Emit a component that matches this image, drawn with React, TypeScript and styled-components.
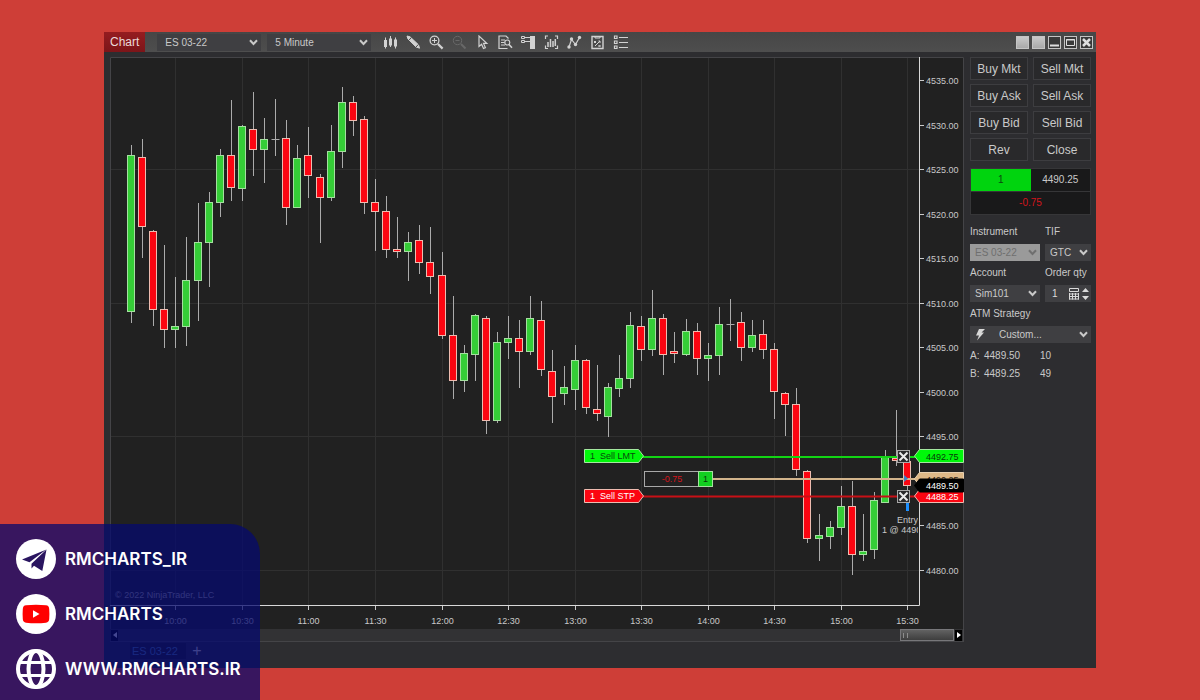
import React from "react";
import styled, { createGlobalStyle } from "styled-components";

const GlobalStyle = createGlobalStyle`
  * { box-sizing: border-box; }
  body {
    margin: 0;
    background: #ce3e37;
    font-family: "Liberation Sans", Arial, sans-serif;
    font-size: 10px;
    color: #c9c9c9;
  }
  button, input, select { font: inherit; color: inherit; margin: 0; padding: 0; border: 0; }
`;

const Page = styled.main`
  position: relative;
  min-height: 100vh;
  padding: 32px 104px;
`;

const TradeWindow = styled.section`
  background: #2d2d30;
`;

const TitleBar = styled.header`
  display: flex;
  align-items: center;
  height: 20px;
  padding-right: 3px;
  background: linear-gradient(#464646, #4e4e4e);
`;

const TitleTag = styled.h1`
  margin: 0 12px 0 0;
  padding: 0 6px;
  align-self: stretch;
  font-size: 12px;
  font-weight: 400;
  line-height: 20px;
  color: #eadada;
  background: linear-gradient(#951c20, #7c1519);
`;

const SelectShell = styled.span<{ $disabled?: boolean }>`
  display: grid;
  align-items: center;
  height: 17px;
  color: ${(p) => (p.$disabled ? "#6f6f6f" : "#c9c9c9")};
  background: ${(p) => (p.$disabled ? "#9a9a9a" : "#3f3f42")};
  svg { grid-area: 1 / 1; justify-self: end; margin-right: 3px; pointer-events: none; }
`;

const NativeSelect = styled.select<{ $indent: number }>`
  grid-area: 1 / 1;
  width: 100%;
  height: 100%;
  padding-left: ${(p) => p.$indent}px;
  appearance: none;
  background: transparent;
  color: inherit;
  opacity: 1;
`;

const TitleSelect = styled.div`
  width: 104px;
  margin-right: 6px;
`;

const Toolbar = styled.div`
  display: flex;
  gap: 8px;
  margin-left: 6px;
`;

const IconButton = styled.button<{ $dim?: boolean }>`
  display: grid;
  place-items: center;
  width: 15px;
  height: 16px;
  background: none;
  color: ${(p) => (p.$dim ? "#686868" : "#d2d2d2")};
`;

const WindowControls = styled.div`
  display: flex;
  gap: 3px;
  margin-left: auto;
`;

const ControlButton = styled.button<{ $filled?: boolean }>`
  display: grid;
  place-items: center;
  width: 13px;
  height: 13px;
  border: 1px solid #c4c4c4;
  color: #dedede;
  background: ${(p) => (p.$filled ? "linear-gradient(#c9c9c9, #a9a9a9)" : "#3a3a3a")};
`;

const Body = styled.div`
  display: grid;
  grid-template-columns: minmax(0, 1fr) 132px;
  padding: 5px 0 0 6px;
`;

const ChartPane = styled.div`
  min-width: 0;
`;

const ChartSvg = styled.svg`
  display: block;
  width: 100%;
  height: auto;
  background: #212121;
  font-family: "Liberation Sans", Arial, sans-serif;
  font-size: 9px;
`;

const ScrollTrack = styled.div`
  display: flex;
  align-items: center;
  height: 13px;
  padding: 0 1px;
  border-right: 1px solid #48484b;
  border-bottom: 1px solid #444447;
  background: #323234;
`;

const ScrollArrow = styled.button`
  display: grid;
  place-items: center;
  width: 7px;
  height: 11px;
  background: #000;
  color: #fff;
`;

const ScrollThumb = styled.div`
  width: 54px;
  height: 12px;
  margin: 0 1px 0 auto;
  padding: 3px 2px;
  border: 1px solid #77777a;
  background: linear-gradient(#626262, #3e3e3e);
  &::before {
    content: "";
    display: block;
    width: 3px;
    height: 5px;
    border: solid #8d8d8d;
    border-width: 0 1px;
  }
`;

const TabRow = styled.nav`
  display: flex;
  align-items: center;
  gap: 5px;
  height: 26px;
  padding: 1px 0 9px 20px;
`;

const Tab = styled.button<{ $wide?: boolean }>`
  width: ${(p) => (p.$wide ? 56 : 12)}px;
  height: 16px;
  text-align: ${(p) => (p.$wide ? "left" : "center")};
  padding-left: ${(p) => (p.$wide ? 2 : 0)}px;
  font-size: ${(p) => (p.$wide ? 11 : 16)}px;
  line-height: 16px;
  color: ${(p) => (p.$wide ? "#4f84b8" : "#e4e4e4")};
  background: ${(p) => (p.$wide ? "#1d1d1f" : "none")};
`;

const OrderPanel = styled.aside`
  padding: 0 5px 0 6px;
`;

const ButtonGrid = styled.div`
  display: grid;
  grid-template-columns: 1fr 1fr;
  gap: 4px 5px;
`;

const OrderButton = styled.button`
  height: 23px;
  border: 1px solid #3d3d40;
  background: #29292b;
  font-size: 12px;
  color: #c9c9c9;
`;

const PositionBox = styled.div`
  display: grid;
  grid-template-columns: 1fr 1fr;
  margin-top: 7px;
  border: 1px solid #363638;
  background: #19191a;
  text-align: center;
  line-height: 22px;
`;

const PositionSize = styled.span`
  background: #00d40e;
  color: #0b4a0f;
`;

const ProfitLoss = styled.span`
  grid-column: 1 / -1;
  border-top: 1px solid #363638;
  color: #d3151c;
`;

const Form = styled.form`
  display: grid;
  grid-template-columns: 70px 1fr;
  gap: 5px;
  margin-top: 10px;
`;

const Field = styled.label<{ $full?: boolean }>`
  display: grid;
  grid-template-rows: 14px 17px;
  gap: 5px;
  grid-column: ${(p) => (p.$full ? "1 / -1" : "auto")};
  line-height: 14px;
  white-space: nowrap;
`;

const QuantityBox = styled.span`
  display: flex;
  align-items: center;
  gap: 3px;
  padding: 0 2px 0 7px;
  background: #3f3f42;
  color: #dadada;
`;

const QuantityInput = styled.input`
  flex: 1;
  width: 0;
  background: none;
`;

const StrategyShell = styled(SelectShell)`
  > svg:first-child { justify-self: start; margin-left: 5px; }
`;

const QuoteTable = styled.table`
  margin-top: 3px;
  border-collapse: collapse;
  th, td { height: 18px; padding: 0; text-align: left; font-weight: 400; }
  th { width: 14px; }
  td:nth-child(2) { width: 56px; }
`;

const SocialCard = styled.footer`
  position: absolute;
  left: 0;
  bottom: 0;
  display: flex;
  flex-direction: column;
  gap: 15px;
  width: 260px;
  height: 176px;
  padding: 15px 16px;
  border-top-right-radius: 30px;
  background: rgba(5, 10, 110, 0.75);
`;

const SocialLink = styled.a`
  display: flex;
  align-items: center;
  gap: 9px;
  font-family: Inter, "Open Sans", sans-serif;
  font-size: 17px;
  font-weight: 600;
  line-height: 40px;
  color: #fff;
  text-decoration: none;
`;

const Chevron = () => (
  <svg width="9" height="7" viewBox="0 0 9 7" fill="none" stroke="currentColor" strokeWidth="2">
    <path d="M1 1.2 4.5 5 8 1.2" />
  </svg>
);

type PickerProps = { label: string; value: string; indent?: number; disabled?: boolean };
const Picker = ({ label, value, indent = 5, disabled }: PickerProps) => (
  <SelectShell $disabled={disabled}>
    <NativeSelect $indent={indent} aria-label={label} disabled={disabled}>
      <option>{value}</option>
    </NativeSelect>
    <Chevron />
  </SelectShell>
);

const tools: { name: string; dim?: boolean; art: React.ReactNode }[] = [
  {
    name: "Chart style",
    art: (
      <>
        <path d="M2.500 2.500v11M7.500 1v11M12.500 2.500v11" />
        <path d="M2.500 5v7M7.500 3.500v7M12.500 4.500v7" strokeWidth="3" />
      </>
    ),
  },
  {
    name: "Drawing tools",
    art: (
      <>
        <path d="m1 1 3 .8 8.5 8 1 3.4-3.5-1.3L2 4Z" fill="currentColor" />
        <path d="m3.2 5 2-2.4M10 12l2.4-2.6" stroke="#4a4a4a" />
      </>
    ),
  },
  {
    name: "Zoom in",
    art: (
      <>
        <circle cx="5.5" cy="5.5" r="4.4" strokeWidth="1.3" />
        <path d="M5.500 3v5M3 5.500h5" />
        <path d="m9 9 4.600 4.600" strokeWidth="2.200" />
      </>
    ),
  },
  {
    name: "Zoom out",
    dim: true,
    art: (
      <>
        <circle cx="5.5" cy="5.5" r="4.2" />
        <path d="M3.500 5.500h4" />
        <path d="m9 9 4.500 4.500" strokeWidth="2" />
      </>
    ),
  },
  { name: "Cursor", art: <path d="M4 1v10.500l2.600-2.300 1.900 4.300 1.900-.9-1.900-4.200h3.300Z" strokeWidth="1.200" /> },
  {
    name: "Data box",
    art: (
      <>
        <path d="M9.500 13.500H1V1h7l2.500 2.500M3 5h4M3 7.500h3.500M3 10h4" strokeWidth="1.200" />
        <circle cx="9.300" cy="7.500" r="2.500" strokeWidth="1.200" />
        <path d="m11 9.500 3 3.300" strokeWidth="1.600" />
      </>
    ),
  },
  {
    name: "Chart trader",
    art: (
      <>
        <path d="M.5 1.500h3v2h-3zM.5 5.500h3v2h-3zM4 2.500h5M4 6.500h5" />
        <path d="M9 1h5v13H9z" fill="currentColor" stroke="none" />
      </>
    ),
  },
  {
    name: "Chart objects",
    art: (
      <>
        <path d="M4 1H1.500v3M11 1h2.500v3M4 13.500H1.500v-3M11 13.500h2.500v-3" strokeWidth="1.200" />
        <path d="M4 7v5M6.500 4v8M9 6v6M11.300 4v7" strokeWidth="1.500" />
      </>
    ),
  },
  {
    name: "Indicators",
    art: (
      <>
        <path d="M2 12 4.500 4.500 8.500 9.500 12.500 2.500" strokeWidth="1.200" />
        <g fill="currentColor" stroke="none">
          <circle cx="2" cy="12" r="1.700" />
          <circle cx="4.500" cy="4" r="1.700" />
          <circle cx="8.500" cy="9.500" r="1.700" />
          <circle cx="12.500" cy="2.500" r="1.700" />
        </g>
      </>
    ),
  },
  {
    name: "Strategies",
    art: (
      <>
        <path d="M2 1.500h11v12H2z" strokeWidth="1.400" />
        <path d="M5 1v2h5V1M4 6l2 2M6 6 4 8M8.500 10l2 2M10.500 10l-2 2M5 11l5-5M8.500 6H10v2" />
      </>
    ),
  },
  {
    name: "Properties",
    art: <path d="M1.500 1h2.500v2.500H1.500zM1.500 6h2.500v2.500H1.500zM1.500 11h2.500v2.500H1.500zM6 2.500h9M6 7.500h9M6 12.500h9" strokeWidth="1.200" />,
  },
];

// Each bar: [direction, high, low, body top, body bottom]
type Bar = ["u" | "d" | "n", number, number, number, number];
const bars: Bar[] = [
  ["u", 145, 323, 155, 312], ["d", 139, 258, 157, 227], ["d", 230, 326, 231, 310],
  ["d", 245, 348, 309, 330], ["u", 277, 348, 326, 330], ["u", 237, 346, 280, 327],
  ["u", 203, 321, 242, 281], ["u", 192, 287, 202, 243], ["u", 149, 217, 155, 203],
  ["d", 100, 201, 155, 188], ["u", 125, 201, 126, 189], ["d", 92, 176, 129, 150],
  ["u", 118, 183, 139, 150], ["n", 99, 156, 139, 140], ["d", 120, 225, 138, 208],
  ["u", 145, 208, 158, 208], ["d", 127, 198, 155, 176], ["d", 174, 243, 177, 198],
  ["u", 125, 201, 151, 198], ["u", 87, 168, 102, 152], ["d", 96, 136, 102, 121],
  ["d", 116, 214, 119, 203], ["d", 179, 251, 202, 212], ["d", 196, 258, 211, 250],
  ["d", 217, 258, 249, 252], ["u", 232, 281, 242, 252], ["d", 225, 274, 240, 263],
  ["d", 227, 294, 262, 277], ["d", 252, 339, 275, 336], ["d", 296, 399, 335, 381],
  ["u", 345, 392, 353, 381], ["u", 314, 381, 315, 355], ["d", 316, 434, 318, 421],
  ["u", 332, 423, 342, 421], ["u", 316, 359, 338, 343], ["d", 320, 388, 338, 352],
  ["u", 296, 355, 318, 352], ["d", 301, 376, 320, 370], ["d", 350, 423, 371, 397],
  ["u", 366, 405, 387, 394], ["u", 345, 410, 360, 390], ["d", 359, 414, 360, 408],
  ["d", 365, 421, 409, 414], ["u", 383, 437, 387, 417], ["u", 355, 397, 378, 389],
  ["u", 312, 388, 325, 379], ["d", 316, 361, 326, 350], ["u", 290, 356, 318, 350],
  ["d", 314, 375, 318, 355], ["d", 332, 363, 351, 354], ["u", 319, 356, 331, 355],
  ["d", 323, 375, 331, 359], ["u", 343, 381, 355, 359], ["u", 307, 375, 324, 356],
  ["n", 299, 341, 324, 325], ["d", 312, 361, 322, 348], ["u", 320, 352, 335, 348],
  ["d", 320, 359, 334, 350], ["d", 343, 419, 349, 392], ["d", 392, 436, 393, 405],
  ["d", 388, 476, 404, 470], ["d", 470, 543, 471, 539], ["u", 514, 561, 535, 539],
  ["u", 521, 549, 527, 537], ["u", 486, 535, 506, 528], ["d", 481, 575, 506, 555],
  ["u", 514, 561, 551, 555], ["u", 492, 559, 500, 550], ["u", 450, 503, 456, 503],
  ["d", 410, 466, 458, 461], ["d", 456, 491, 461, 486],
];

const barX = (i: number) => Math.round(131 + i * 11.09) + 0.5;
const timeLabels = ["10:00", "10:30", "11:00", "11:30", "12:00", "12:30", "13:00", "13:30", "14:00", "14:30", "15:00", "15:30"];
const timeX = (i: number) => barX(4 + i * 6);
const prices = Array.from({ length: 12 }, (_, i) => 4535 - i * 5).filter((p) => p !== 4490);
const priceY = (p: number) => Math.round(80 + (4535 - p) * 8.9) + 0.5;

const Candle = ({ bar, x }: { bar: Bar; x: number }) => {
  const [dir, high, low, top, bottom] = bar;
  const fill = dir === "u" ? "#35cd37" : "#fb0511";
  return (
    <g>
      <path d={`M${x} ${high}V${low}`} stroke="#ababab" />
      {dir === "n" ? (
        <path d={`M${x - 4} ${top + 0.5}h8`} stroke="#ababab" />
      ) : (
        <rect x={x - 4} y={top + 0.5} width="7" height={bottom - top - 1} fill={fill} stroke={dir === "u" ? "#a5dfa0" : "#eebcb0"} />
      )}
    </g>
  );
};

type TagProps = { y: number; fill: string; edge: string; text: string; color: string };
const PriceTag = ({ y, fill, edge, text, color }: TagProps) => (
  <g>
    <path d={`M914.500 ${y}l5-6.500H963.500v13H919.500Z`} fill={fill} stroke={edge} />
    <text x="926" y={y + 3.500} fill={color}>{text}</text>
  </g>
);

const OrderTag = ({ y, fill, edge, text, color }: TagProps) => (
  <g>
    <path d={`M584.500 ${y - 6.500}h54l5 6.500-5 6.500h-54Z`} fill={fill} stroke={edge} />
    <text x="590" y={y + 3} fill={color}>1</text>
    <text x="600" y={y + 3} fill={color}>{text}</text>
  </g>
);

const CancelMark = ({ y }: { y: number }) => (
  <g>
    <rect x="897.500" y={y - 6} width="12" height="12" fill="#29292b" stroke="#a8a8a8" />
    <path d={`M899.500 ${y - 4}l8 8m0-8-8 8`} stroke="#ececec" strokeWidth="2" />
  </g>
);

const PriceChart = () => (
  <ChartSvg viewBox="110 57 854 572" role="img" aria-label="ES 03-22 five minute candlestick chart">
    <defs>
      <clipPath id="plot"><rect x="110" y="57" width="808" height="548" /></clipPath>
    </defs>
    <path d="M110.500 629V57.500H963.500V629" fill="none" stroke="#444447" />
    <g stroke="#303030">
      {timeLabels.map((t, i) => <path key={t} d={`M${timeX(i)} 58V605`} />)}
      {[4525, 4510, 4495, 4480].map((p) => <path key={p} d={`M111 ${priceY(p)}H919`} />)}
    </g>
    <text x="115" y="598" fill="#b0b0b0">© 2022 NinjaTrader, LLC</text>
    {bars.map((bar, i) => <Candle key={i} bar={bar} x={barX(i)} />)}
    <path d="M643 457H915" stroke="#12d414" strokeWidth="2" />
    <path d="M713 479H915" stroke="#d2b48c" strokeWidth="2" />
    <path d="M643 496.500H915" stroke="#c81016" strokeWidth="2" />
    <path d="M904 475l4 3.500-4 3.500Z" fill="#3f7fc4" />
    <path d="M907.500 502v9" stroke="#1e90ff" strokeWidth="3" />
    <g clipPath="url(#plot)" fill="#c9c9c9">
      <text x="897" y="523">Entry</text>
      <text x="882" y="533">1 @ 4490</text>
    </g>
    <path d="M110 605.500H919.500V57" fill="none" stroke="#d8d8d8" />
    <g fill="#c9c9c9" stroke="none">
      {prices.map((p) => <text key={p} x="926" y={priceY(p) + 3}>{p.toFixed(2)}</text>)}
      {timeLabels.map((t, i) => <text key={t} x={timeX(i)} y="624" textAnchor="middle">{t}</text>)}
    </g>
    <g stroke="#c9c9c9">
      {prices.map((p) => <path key={p} d={`M920 ${priceY(p)}h4`} />)}
      {timeLabels.map((t, i) => <path key={t} d={`M${timeX(i)} 606v4`} />)}
    </g>
    <OrderTag y={456} fill="#00f80a" edge="#a5e8a0" text="Sell LMT" color="#084a0a" />
    <OrderTag y={496} fill="#fb0511" edge="#eebcb0" text="Sell STP" color="#ffffff" />
    <rect x="644.500" y="471.500" width="68" height="15" fill="#212121" stroke="#a9a9a9" />
    <rect x="698.500" y="471.500" width="14" height="15" fill="#12cf20" stroke="#a5dfa0" />
    <text x="672" y="482" fill="#d3151c" textAnchor="middle">-0.75</text>
    <text x="703" y="482" fill="#083a0a">1</text>
    <PriceTag y={456} fill="#00f80a" edge="#a5e8a0" text="4492.75" color="#063a08" />
    <PriceTag y={479} fill="#deb887" edge="#e8d0b0" text="4490.25" color="#2a2010" />
    <PriceTag y={496} fill="#fb0511" edge="#eebcb0" text="4488.25" color="#ffffff" />
    <PriceTag y={485.500} fill="#000000" edge="#000000" text="4489.50" color="#ffffff" />
    <CancelMark y={456.500} />
    <CancelMark y={496.500} />
  </ChartSvg>
);

const orderActions = ["Buy Mkt", "Sell Mkt", "Buy Ask", "Sell Ask", "Buy Bid", "Sell Bid", "Rev", "Close"];

const OrderEntry = () => (
  <OrderPanel>
    <ButtonGrid>
      {orderActions.map((a) => <OrderButton key={a}>{a}</OrderButton>)}
    </ButtonGrid>
    <PositionBox>
      <PositionSize>1</PositionSize>
      <span>4490.25</span>
      <ProfitLoss>-0.75</ProfitLoss>
    </PositionBox>
    <Form>
      <Field>Instrument<Picker label="Instrument" value="ES 03-22" disabled /></Field>
      <Field>TIF<Picker label="TIF" value="GTC" /></Field>
      <Field>Account<Picker label="Account" value="Sim101" /></Field>
      <Field>
        Order qty
        <QuantityBox>
          <QuantityInput defaultValue="1" aria-label="Order qty" />
          <svg width="10" height="12" viewBox="0 0 10 12" fill="none" stroke="currentColor">
            <path d="M.5.500h9v3h-9zM0 6h10M0 8.500h10M0 11h10M.5 5v6.500M3.500 5v6.500M6.500 5v6.500M9.500 5v6.500" />
          </svg>
          <svg width="7" height="12" viewBox="0 0 7 12" fill="currentColor">
            <path d="M0 4 3.500 0 7 4ZM0 8h7l-3.500 4Z" />
          </svg>
        </QuantityBox>
      </Field>
      <Field $full>
        ATM Strategy
        <StrategyShell>
          <svg width="11" height="12" viewBox="0 0 11 12" fill="#d8d8d8">
            <path d="M4 0h6L6.500 3.500H9L2 11.500 4 6.500H1Z" />
          </svg>
          <NativeSelect $indent={29} aria-label="ATM Strategy"><option>Custom...</option></NativeSelect>
          <Chevron />
        </StrategyShell>
      </Field>
    </Form>
    <QuoteTable>
      <tbody>
        <tr><th scope="row">A:</th><td>4489.50</td><td>10</td></tr>
        <tr><th scope="row">B:</th><td>4489.25</td><td>49</td></tr>
      </tbody>
    </QuoteTable>
  </OrderPanel>
);

const Socials = () => (
  <SocialCard>
    <SocialLink href="#telegram">
      <svg width="40" height="40" viewBox="0 0 40 40">
        <circle cx="20" cy="20" r="20" fill="#fff" />
        <path d="M30.500 10.500 6 20.500 13.500 23.300 27 13Z" fill="#2a1560" />
        <path d="M30.500 10.500 26.300 32 18 26.800 15.500 29.500V24.800Z" fill="#2a1560" />
      </svg>
      RMCHARTS_IR
    </SocialLink>
    <SocialLink href="#youtube">
      <svg width="40" height="40" viewBox="0 0 40 40">
        <circle cx="20" cy="20" r="20" fill="#fff" />
        <path d="M10 11.300Q20 10.300 30 11.300 33 11.600 33.200 15 33.600 20 33.200 25 33 28.400 30 28.700 20 29.700 10 28.700 7 28.400 6.800 25 6.400 20 6.800 15 7 11.600 10 11.300Z" fill="#f00" />
        <path d="M17 16.300v7.500l6.500-3.800Z" fill="#fff" />
      </svg>
      RMCHARTS
    </SocialLink>
    <SocialLink href="#website">
      <svg width="40" height="40" viewBox="0 0 40 40" fill="none" stroke="#fff" strokeWidth="3">
        <circle cx="20" cy="20" r="18" strokeWidth="4" />
        <ellipse cx="20" cy="20" rx="7.500" ry="18" strokeWidth="4" />
        <path d="M4 13.500h32M4 26.500h32" />
      </svg>
      WWW.RMCHARTS.IR
    </SocialLink>
  </SocialCard>
);

export default function App() {
  return (
    <>
      <GlobalStyle />
      <Page>
        <TradeWindow>
          <TitleBar>
            <TitleTag>Chart</TitleTag>
            <TitleSelect><Picker label="Chart instrument" value="ES 03-22" indent={8} /></TitleSelect>
            <TitleSelect><Picker label="Interval" value="5 Minute" indent={8} /></TitleSelect>
            <Toolbar>
              {tools.map((t) => (
                <IconButton key={t.name} aria-label={t.name} $dim={t.dim}>
                  <svg width="15" height="15" viewBox="0 0 15 15" fill="none" stroke="currentColor">{t.art}</svg>
                </IconButton>
              ))}
            </Toolbar>
            <WindowControls>
              <ControlButton $filled aria-label="Instrument link" />
              <ControlButton $filled aria-label="Interval link" />
              <ControlButton aria-label="Minimize">
                <svg width="9" height="9" viewBox="0 0 9 9" stroke="currentColor" strokeWidth="2"><path d="M0 7.500h9" /></svg>
              </ControlButton>
              <ControlButton aria-label="Maximize">
                <svg width="9" height="9" viewBox="0 0 9 9" fill="none" stroke="currentColor"><path d="M.5 1.500h8v6h-8zM0 2h9" /></svg>
              </ControlButton>
              <ControlButton aria-label="Close window">
                <svg width="9" height="9" viewBox="0 0 9 9" stroke="currentColor" strokeWidth="2.500"><path d="m1 1 7 7M8 1 1 8" /></svg>
              </ControlButton>
            </WindowControls>
          </TitleBar>
          <Body>
            <ChartPane>
              <PriceChart />
              <ScrollTrack>
                <ScrollArrow aria-label="Scroll left">
                  <svg width="4" height="6" viewBox="0 0 4 6" fill="currentColor"><path d="M4 0v6L0 3Z" /></svg>
                </ScrollArrow>
                <ScrollThumb />
                <ScrollArrow aria-label="Scroll right">
                  <svg width="4" height="6" viewBox="0 0 4 6" fill="currentColor"><path d="M0 0v6l4-3Z" /></svg>
                </ScrollArrow>
              </ScrollTrack>
              <TabRow>
                <Tab $wide>ES 03-22</Tab>
                <Tab aria-label="Add tab">+</Tab>
              </TabRow>
            </ChartPane>
            <OrderEntry />
          </Body>
        </TradeWindow>
        <Socials />
      </Page>
    </>
  );
}
